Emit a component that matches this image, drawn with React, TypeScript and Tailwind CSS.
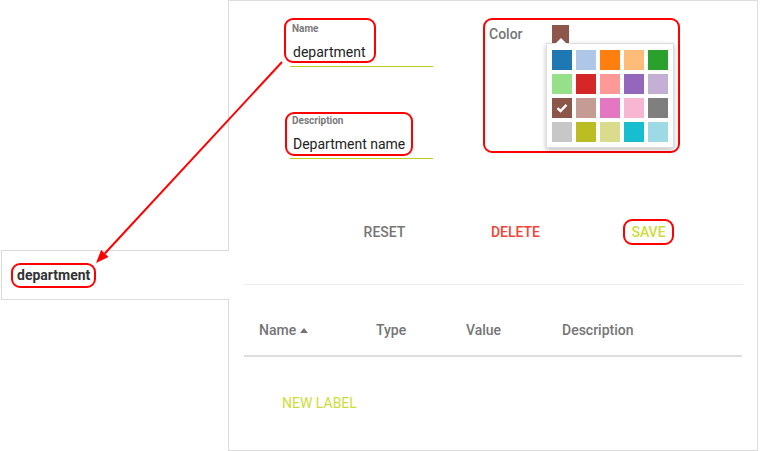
import React from 'react'

const swatches = [
  '#1f77b4', '#aec7e8', '#ff7f0e', '#ffbb78', '#2ca02c',
  '#98df8a', '#d62728', '#ff9896', '#9467bd', '#c5b0d5',
  '#8c564b', '#c49c94', '#e377c2', '#f7b6d2', '#7f7f7f',
  '#c7c7c7', '#bcbd22', '#dbdb8d', '#17becf', '#9edae5',
]

function Field(props: { label: string; value: string; className?: string }) {
  return (
    <div className={'w-[143px] flex flex-col ' + (props.className ?? '')}>
      <span className="pl-[2px] text-[10px] leading-[12px] font-bold text-[#7a7a7a]">{props.label}</span>
      <span className="mt-[8px] pl-[3px] text-[14px] leading-[18px] text-[#222]">{props.value}</span>
      <div className="mt-[5px] h-[1px] bg-[#c0cb1e]" />
    </div>
  )
}

export default function App() {
  return (
    <div className="relative w-[760px] h-[451px] bg-white flex font-['Roboto',sans-serif] overflow-hidden">
      {/* Left list card */}
      <div className="w-[228px] shrink-0 pt-[250px]">
        <div className="relative z-10 ml-px w-[228px] h-[50px] bg-white border-t border-b border-l border-[#dcdcdc] flex items-center pl-[9px]">
          <span className="h-[25px] px-[4px] flex items-center border-2 border-[#f00] rounded-[9px] text-[14px] font-bold text-[#333]">
            department
          </span>
        </div>
      </div>

      {/* Main panel */}
      <div className="w-[530px] h-[451px] shrink-0 border border-[#dcdcdc] flex flex-col">
        <div className="h-[213px] flex items-start">
          <div className="ml-[61px] pt-[22px] flex flex-col">
            <Field label="Name" value="department" />
            <Field label="Description" value="Department name" className="mt-[48px]" />
          </div>
          <div className="ml-[56px] pt-[23px] flex items-start">
            <span className="w-[63px] text-[14px] leading-[20px] font-medium text-[#757575]">Color</span>
            <div className="relative mt-px">
              <div className="w-[17px] h-[19px] bg-[#8c564b]" />
              <div className="absolute left-[-6px] top-[18px] z-10 w-[128px] bg-white border border-[#dedede] shadow-[0_2px_5px_rgba(0,0,0,0.25)] pt-[6px] pb-[5px] px-[5px] grid grid-cols-5 gap-[4px]">
                {swatches.map((c, i) => (
                  <div key={i} className="w-[20px] h-[20px] flex items-center justify-center" style={{ backgroundColor: c }}>
                    {i === 10 && (
                      <svg width="12" height="10" viewBox="0 0 12 10">
                        <path d="M1.5 5.2 L4.5 8 L10.5 1.8" fill="none" stroke="white" strokeWidth="2.4" />
                      </svg>
                    )}
                  </div>
                ))}
              </div>
              <svg className="absolute left-[3px] top-[13px] z-20" width="12" height="6" viewBox="0 0 12 6">
                <path d="M0 6 L6 0 L12 6 Z" fill="white" />
              </svg>
            </div>
          </div>
        </div>

        {/* Action buttons */}
        <div className="h-[36px] flex items-center pl-[90px] text-[14px] font-medium uppercase">
          <span className="w-[131px] text-center text-[#757575]">Reset</span>
          <span className="w-[131px] text-center text-[#f44336]">Delete</span>
          <span className="w-[135px] flex justify-center">
            <span className="h-[26px] px-[6px] flex items-center border-2 border-[#f00] rounded-[9px] text-[#cddc39]">Save</span>
          </span>
        </div>

        <div className="mt-[34px] mx-[14px] h-px bg-[#ececec]" />

        {/* Table header */}
        <div className="mx-[15px] pt-[35px] pb-[15px] border-b-2 border-[#dddddd] flex items-center pl-[15px] text-[14px] leading-[20px] font-medium text-[#757575]">
          <span className="w-[117px] flex items-center gap-[4px]">
            Name
            <svg width="8" height="5" viewBox="0 0 8 5"><path d="M0 5 L4 0 L8 5 Z" fill="#757575" /></svg>
          </span>
          <span className="w-[90px]">Type</span>
          <span className="w-[96px]">Value</span>
          <span>Description</span>
        </div>

        <div className="mt-[36px] ml-[53px] text-[14px] leading-[20px] text-[#cddc39]">NEW LABEL</div>
      </div>

      {/* Annotations */}
      <div className="absolute left-[284px] top-[18px] w-[92px] h-[45px] border-2 border-[#f00] rounded-[9px] pointer-events-none" />
      <div className="absolute left-[285px] top-[112px] w-[128px] h-[44px] border-2 border-[#f00] rounded-[9px] pointer-events-none" />
      <div className="absolute left-[483px] top-[18px] w-[197px] h-[135px] border-2 border-[#f00] rounded-[9px] pointer-events-none" />
      <svg className="absolute left-0 top-0 z-30 pointer-events-none" width="760" height="451">
        <line x1="282" y1="62" x2="104.8" y2="253.5" stroke="#f00" strokeWidth="2" />
        <polygon points="96,263 108.5,256.9 101.1,250.1" fill="#f00" />
      </svg>
    </div>
  )
}
